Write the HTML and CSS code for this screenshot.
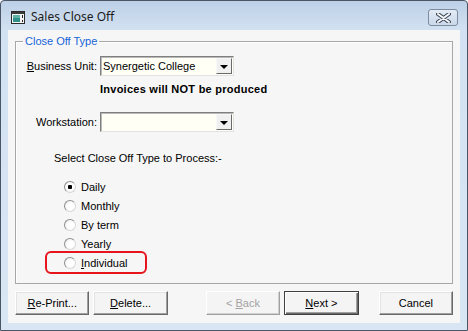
FILE: index.html
```html
<!DOCTYPE html>
<html lang="en">

<head>
    <meta charset="UTF-8">
    <title>Sales Close Off</title>
    <link rel="stylesheet" href="styles.css">
</head>

<body>
    <div class="window">
        <div class="titlebar">
            <svg class="app-icon" width="14" height="13" viewBox="0 0 14 13">
                <rect x="0.5" y="0.5" width="13" height="12" fill="#f4f4f4" stroke="#2a2a2a"/>
                <rect x="1" y="1" width="12" height="2" fill="#3a3a3a"/>
                <rect x="2" y="4" width="7" height="7" fill="#2f8f8a"/>
                <rect x="2" y="4" width="7" height="3" fill="#5fb3a6"/>
                <rect x="11" y="4" width="1" height="3" fill="#222"/>
                <rect x="11" y="9" width="1" height="2" fill="#222"/>
            </svg>
            <span class="title">Sales Close Off</span>
            <div class="close-btn">
                <svg width="15" height="10" viewBox="0 0 15 10">
                    <path d="M2 1 L13 9 M13 1 L2 9" stroke="#3c4656" stroke-width="4" stroke-linecap="round"/>
                    <path d="M2 1 L13 9 M13 1 L2 9" stroke="#f6f8fb" stroke-width="2" stroke-linecap="round"/>
                </svg>
            </div>
        </div>

        <div class="client">
            <fieldset class="group">
                <legend>Close Off Type</legend>

                <div class="form-row">
                    <label class="field-label"><u>B</u>usiness Unit:</label>
                    <div class="combo">
                        <span class="combo-text">Synergetic College</span>
                        <span class="combo-btn"><span class="arrow"></span></span>
                    </div>
                </div>

                <p class="notice">Invoices will NOT be produced</p>

                <div class="form-row workstation">
                    <label class="field-label">Workstation:</label>
                    <div class="combo">
                        <span class="combo-text"></span>
                        <span class="combo-btn"><span class="arrow"></span></span>
                    </div>
                </div>

                <p class="prompt">Select Close Off Type to Process:-</p>

                <div class="radio-list">
                    <label class="radio-row"><input type="radio" name="type" checked> Daily</label>
                    <label class="radio-row"><input type="radio" name="type"> Monthly</label>
                    <label class="radio-row"><input type="radio" name="type"> By term</label>
                    <label class="radio-row"><input type="radio" name="type"> Yearly</label>
                    <label class="radio-row highlight"><input type="radio" name="type"> <span><u>I</u>ndividual</span></label>
                </div>
            </fieldset>

            <div class="button-bar">
                <button class="btn"><u>R</u>e-Print...</button>
                <button class="btn"><u>D</u>elete...</button>
                <button class="btn back" disabled>&lt; <u>B</u>ack</button>
                <button class="btn default"><u>N</u>ext &gt;</button>
                <button class="btn cancel">Cancel</button>
            </div>
        </div>
    </div>
</body>

</html>
```

FILE: styles.css
```css
body {
    margin: 0;
    padding: 0;
    background: #ffffff;
    font-family: "Liberation Sans", Arial, sans-serif;
    font-size: 11px;
    color: #000;
}

.window {
    width: 466px;
    height: 329px;
    border: 1px solid #4a5566;
    border-radius: 4px 4px 0 0;
    background: linear-gradient(to bottom, #bdd0e6 0px, #d3e2f2 30px, #d8e6f4 100%);
    display: flex;
    flex-direction: column;
}

.titlebar {
    height: 29px;
    display: flex;
    align-items: center;
    padding: 0 9px 0 10px;
}

.app-icon {
    margin-top: 3px;
}

.title {
    font-family: "Noto Sans", "Open Sans", sans-serif;
    font-size: 12px;
    color: #1b1b1b;
    margin-left: 6px;
    margin-top: 2px;
}

.close-btn {
    margin-left: auto;
    margin-top: 4px;
    width: 28px;
    height: 15px;
    border: 1px solid #7d8ba0;
    border-radius: 3px;
    background: linear-gradient(to bottom, #e3ebf5, #cad8e8);
    display: flex;
    align-items: center;
    justify-content: center;
}

.client {
    margin: 0 7px 7px 7px;
    flex: 1;
    background: #f6f6f6;
    padding: 4px 7px 0 7px;
    display: flex;
    flex-direction: column;
}

.group {
    margin: 0;
    padding: 8px 0 11px 0;
    border: 1px solid #a7a7a7;
    box-shadow: inset 1px 1px 0 #ffffff;
}

.group legend {
    color: #1763d6;
    padding: 0 2px;
    margin-left: 7px;
    line-height: 14px;
}

.form-row {
    display: flex;
    align-items: center;
    height: 20px;
}

.field-label {
    width: 81px;
    text-align: right;
    margin-right: 3px;
}

.combo {
    width: 130px;
    height: 16px;
    padding: 1px;
    background: #fffff6;
    border: 1px solid;
    border-color: #7f7f7f #e2e2e2 #e2e2e2 #7f7f7f;
    box-shadow: inset 1px 1px 0 #b9b9b9;
    display: flex;
    align-items: center;
}

.combo-text {
    flex: 1;
    padding-left: 1px;
}

.combo-btn {
    width: 14px;
    height: 14px;
    background: #f0f0f0;
    border: 1px solid;
    border-color: #f8f8f8 #6a6a6a #6a6a6a #f8f8f8;
    display: flex;
    align-items: center;
    justify-content: center;
}

.arrow {
    width: 0;
    height: 0;
    border-left: 4px solid transparent;
    border-right: 4px solid transparent;
    border-top: 4px solid #000;
    margin-top: 1px;
}

.notice {
    margin: 6px 0 0 84px;
    line-height: 14px;
    font-weight: bold;
    letter-spacing: 0.25px;
}

.workstation {
    margin-top: 16px;
}

.prompt {
    margin: 19px 0 0 38px;
    line-height: 14px;
}

.radio-list {
    margin: 12px 0 0 31px;
    display: flex;
    flex-direction: column;
}

.radio-row {
    width: 81px;
    height: 19px;
    padding-left: 17px;
    display: flex;
    align-items: center;
    border-radius: 4px;
}

.radio-row input {
    appearance: none;
    -webkit-appearance: none;
    width: 12px;
    height: 12px;
    margin: 0 5px 0 0;
    border: 1px solid #a2a2a2;
    border-color: #8f8f8f #d8d8d8 #d8d8d8 #8f8f8f;
    border-radius: 50%;
    background: radial-gradient(circle at 60% 60%, #ffffff 40%, #e6e6e6 100%);
}

.radio-row input:checked {
    background: radial-gradient(circle, #000 0, #000 2px, #ffffff 2.5px, #f0f0f0 100%);
}

.radio-row.highlight {
    outline: 2px solid #e8141c;
}

.button-bar {
    margin-top: 7px;
    display: flex;
}

.btn {
    width: 75px;
    height: 24px;
    padding: 0;
    font-family: "Liberation Sans", Arial, sans-serif;
    font-size: 11px;
    color: #000;
    background: #f4f4f4;
    border: 1px solid;
    border-color: #ffffff #696969 #696969 #ffffff;
    box-shadow: inset -1px -1px 0 #a0a0a0, inset 1px 1px 0 #e3e3e3;
    margin-right: 4px;
}

.btn.back {
    margin-left: 34px;
    color: #a3a3a3;
    border-color: #ffffff #a0a0a0 #a0a0a0 #ffffff;
    box-shadow: inset -1px -1px 0 #d0d0d0;
}

.btn.default {
    border: 1px solid #404040;
    box-shadow: inset 1px 1px 0 #ffffff, inset -1px -1px 0 #696969, inset -2px -2px 0 #a0a0a0;
}

.btn.cancel {
    margin-left: 16px;
    margin-right: 0;
}
```
